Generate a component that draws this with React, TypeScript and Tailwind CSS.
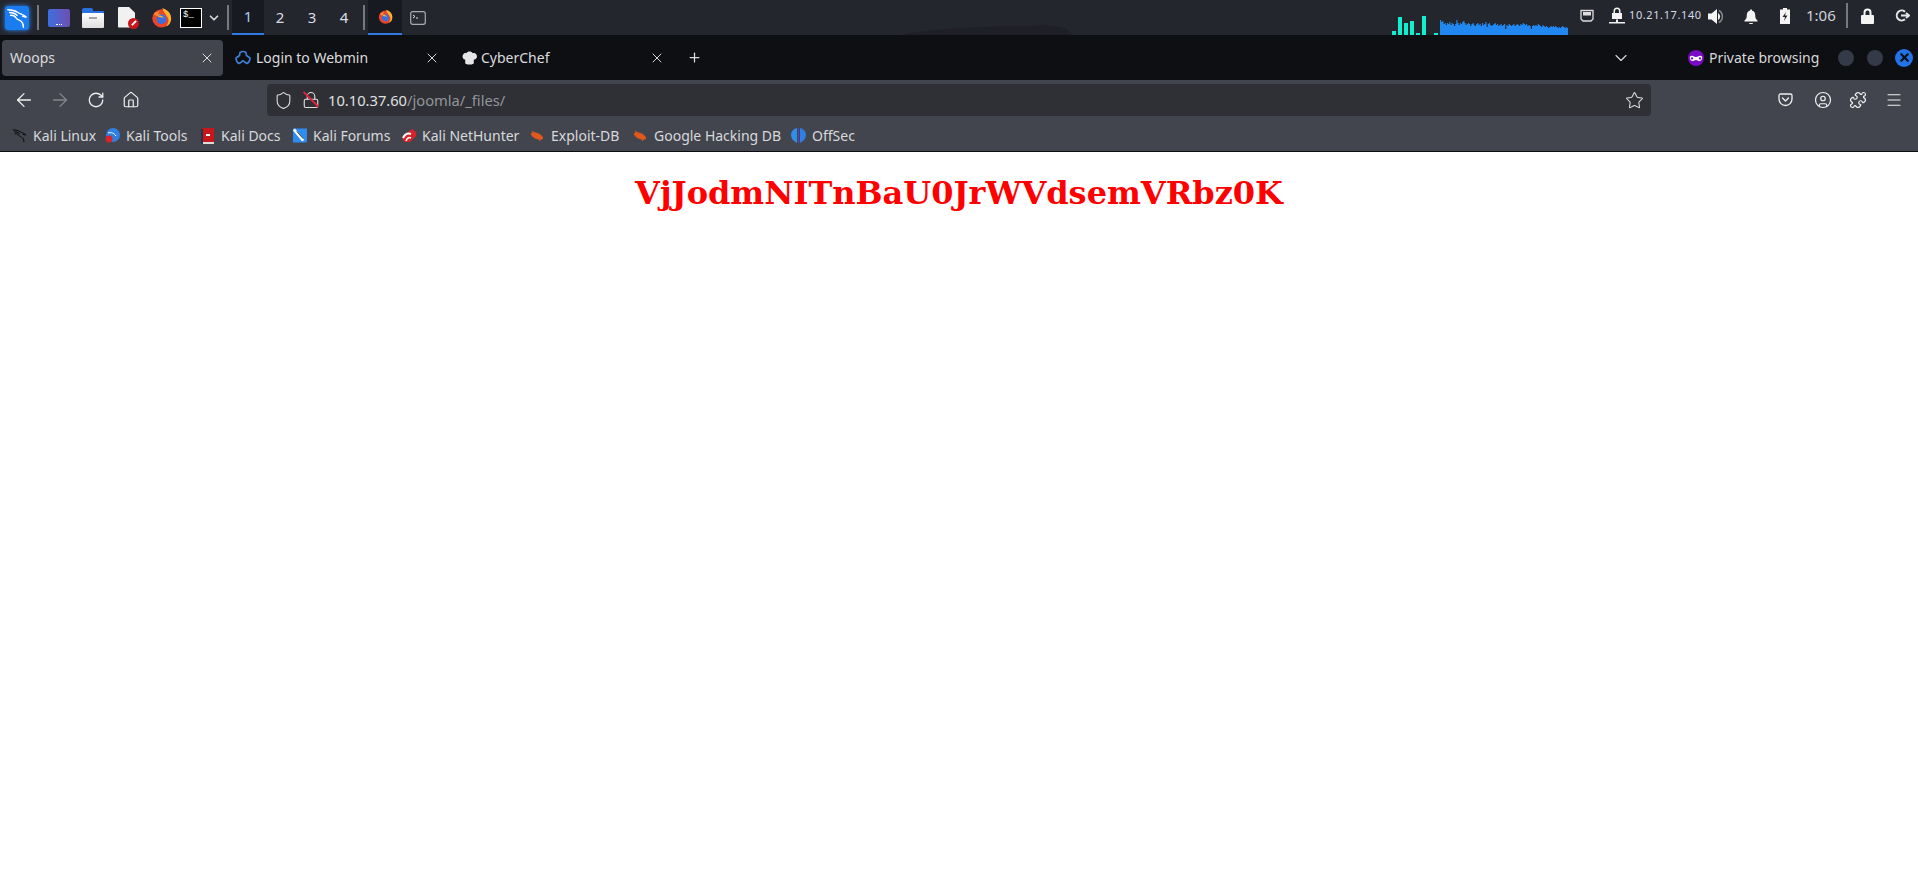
import { ArrowLeft, ArrowRight, RotateCw, Home, Shield, Star, CircleUser, Puzzle, Menu, X, Plus, ChevronDown, Lock } from 'lucide-react'
import type { ReactNode } from 'react'

const uiFont = 'font-["Noto_Sans",sans-serif]'

const cpuBars = [4, 18, 12, 14, 2, 19, 0, 2]

// rough outline of the network graph, one value per step
const netLevels = [15, 13, 14, 11, 12, 10, 12, 11, 13, 10, 12, 11, 9, 11, 15, 12, 10, 12, 11, 13, 14, 12, 10, 11, 12, 11, 9, 11, 12, 10, 9, 11, 12, 10, 11, 9, 12, 10, 11, 13, 8, 11, 12, 10, 9, 10, 11, 12, 10, 11, 9, 10, 11, 9, 10, 11, 6, 10, 9, 11, 10, 9, 10, 11, 9, 10, 11, 10, 9, 11, 10, 12, 11, 10, 11, 9, 10, 9, 6, 9, 10, 9, 10, 9, 11, 10, 9, 8, 10, 9, 8, 9, 8, 7, 8, 9, 8, 9, 8, 9, 8, 7, 8, 7, 8, 9, 8, 7, 8, 7]

const netPath =
  'M0 16 ' + netLevels.map((v, i) => `H${(i * 128) / netLevels.length} V${16 - v}`).join(' ') + ' H128 V16 Z'

function KaliDragon({ className = '', color = '#fff' }: { className?: string; color?: string }) {
  return (
    <svg className={className} viewBox="0 0 24 24" fill="none" stroke={color} strokeWidth={1.6} strokeLinecap="round" strokeLinejoin="round">
      <path d="M2 3c4 0 8 1 11 3 3 2 6 2 9 5" />
      <path d="M4 6c3 0 6 1 8 3" />
      <path d="M5 9c3 0 5 1 6 3 1 2 4 2 6 4 2 2 2 4 2 6" />
      <path d="M21 11l-3-1" />
    </svg>
  )
}

function FirefoxIcon({ size = 21 }: { size?: number }) {
  return (
    <svg width={size} height={size} viewBox="0 0 24 24">
      <circle cx="12" cy="13" r="10.500" fill="#e8452c" />
      <path d="M13 1c5 2 10 5 10 12 0 4-2 8-6 9 3-3 4-7 2-10-1-3-5-6-6-11z" fill="#ffb22e" />
      <path d="M3 8c2-3 5-3 7-3l-2 3 6 1c-1 2-3 2-5 2-2-1-4-1-6-3z" fill="#ff8a2b" />
      <circle cx="12" cy="14" r="5.500" fill="#3b6fe0" />
      <path d="M7 10c3-1 6 0 8 2-3 0-6 0-8-2z" fill="#ffb22e" />
    </svg>
  )
}

function PanelDivider() {
  return <div className="w-[2px] h-[25px] bg-[#77797e]" />
}

function Workspace({ n, active }: { n: number; active?: boolean }) {
  return (
    <div className={`w-[32px] h-[35px] flex items-center justify-center text-[15px] ${active ? 'bg-[#181a21] border-b-2 border-[#2f7ae5] text-[#a5cdf5]' : 'text-[#d8dde6]'}`}>
      {n}
    </div>
  )
}

function TopPanel() {
  return (
    <div className={`relative h-[35px] bg-[#24262e] flex items-center ${uiFont}`}>
      <svg className="absolute left-[900px] top-[24px]" width="185" height="11" viewBox="0 0 185 11">
        <path d="M0 11C30 5 80 2 130 2c15-2 30 0 37 3l6 6z" fill="#1f2027" />
      </svg>

      <div className="relative ml-[5px] w-[24px] h-[24px] rounded-[3px] bg-[#1b7cf0] shadow-[0_0_5px_#2a8cff] flex items-center justify-center">
        <KaliDragon className="w-[22px] h-[22px]" />
      </div>
      <div className="ml-[8px]"><PanelDivider /></div>
      <div className="ml-[9px] w-[22px] h-[18px] rounded-[2px] bg-gradient-to-r from-[#3a6ee0] to-[#6a4fb0] flex items-end justify-center">
        <span className="w-[6px] h-[2px] mb-[2px] border-b border-dotted border-white" />
      </div>
      <div className="ml-[12px] w-[22px] h-[20px] relative">
        <div className="absolute left-0 top-0 w-[11px] h-[6px] rounded-t-[2px] bg-[#2a6fe0]" />
        <div className="absolute left-0 top-[3px] w-[22px] h-[3px] bg-[#2a6fe0]" />
        <div className="absolute left-0 top-[5px] w-[22px] h-[15px] rounded-[1px] bg-gradient-to-b from-[#ffffff] to-[#dfdfdf] flex justify-center">
          <span className="w-[8px] h-[2px] mt-[4px] bg-[#a5a5a5]" />
        </div>
      </div>
      <div className="ml-[14px] w-[21px] h-[22px] relative">
        <div className="w-[17px] h-[21px] rounded-[1px] bg-[#f1f1f1] [clip-path:polygon(0_0,62%_0,100%_30%,100%_100%,0_100%)]" />
        <div className="absolute right-0 bottom-0 w-[11px] h-[11px] rounded-full bg-[#c8161d] flex items-center justify-center">
          <span className="w-[6px] h-[2px] bg-white -rotate-45" />
        </div>
      </div>
      <div className="ml-[12px]"><FirefoxIcon /></div>
      <div className="ml-[8px] w-[22px] h-[20px] border border-white bg-black text-white text-[9px] leading-[12px] pl-[2px] font-['Liberation_Mono',monospace]">
        $_
      </div>
      <ChevronDown className="ml-[5px] w-[14px] h-[14px] text-[#d8d8d8]" strokeWidth={3} />
      <div className="ml-[6px]"><PanelDivider /></div>
      <div className="ml-[3px] flex">
        <Workspace n={1} active />
        <Workspace n={2} />
        <Workspace n={3} />
        <Workspace n={4} />
      </div>
      <div className="ml-[3px]"><PanelDivider /></div>
      <div className="ml-[3px] w-[34px] h-[35px] bg-[#181a21] border-b-2 border-[#2f7ae5] flex items-center justify-center">
        <FirefoxIcon size={15} />
      </div>
      <div className="w-[32px] h-[35px] flex items-center justify-center">
        <svg width="16" height="14" viewBox="0 0 16 14" fill="none">
          <rect x="0.700" y="0.700" width="14.600" height="12.600" rx="2" fill="#2a2c33" stroke="#a9abb0" strokeWidth="1.200" />
          <path d="M3 4l2 1.500L3 7" stroke="#e0e0e0" />
          <path d="M6 7h2" stroke="#e0e0e0" />
        </svg>
      </div>

      <div className="relative ml-auto flex items-center">
        <div className="h-[34px] flex items-end gap-[2px] self-end">
          {cpuBars.map((h, i) => (
            <div key={i} className="w-[4px] bg-[#0ff0d0]" style={{ height: h }} />
          ))}
        </div>
        <svg className="ml-[2px] self-end" width="128" height="16" viewBox="0 0 128 16">
          <path d={netPath} fill="#2088f0" />
        </svg>
        <div className="h-[35px] flex items-center pb-[3px]">
          <svg className="ml-[12px]" width="14" height="14" viewBox="0 0 14 14" fill="none">
            <path d="M1 1.500h12v8.500l-2 2H3l-2-2z" stroke="#ddd" strokeWidth="1.300" />
            <path d="M3 3h8v3.500H3z" fill="#ddd" />
          </svg>
          <svg className="ml-[15px]" width="16" height="18" viewBox="0 0 16 18" fill="#f2f2f2">
            <path fillRule="evenodd" d="M4.500 6V4a3.500 3.500 0 0 1 7 0v2H13v6H3V6zM6 6h4V4a2 2 0 0 0-4 0z" />
            <path d="M7 12.500h2V15h7v1.500H0V15h7z" />
          </svg>
        </div>
        <span className="ml-[4px] -mt-[5px] w-[73px] text-[11px] tracking-[0.6px] text-[#d6dbe4] whitespace-nowrap">10.21.17.140</span>
        <svg className="ml-[6px] -mt-[3px]" width="17" height="17" viewBox="0 0 17 17">
          <path d="M0 5.500h3.500L9 1v15l-5.500-4.500H0z" fill="#f4f4f4" />
          <path d="M11 2.500a7 7 0 0 1 0 12" fill="none" stroke="#85878c" strokeWidth="1.500" />
          <path d="M10 5a4 4 0 0 1 0 7z" fill="#f4f4f4" />
        </svg>
        <svg className="ml-[19px] -mt-[3px]" width="14" height="15" viewBox="0 0 14 15" fill="#f4f4f4">
          <path d="M7 0.500c.8 0 1.200.6 1.200 1.200 2 .5 3 2.300 3 4.300 0 3 .8 4.300 2.300 5.500v1H.5v-1C2 10.300 2.800 9 2.800 6c0-2 1-3.800 3-4.300C5.800 1.100 6.200.5 7 .5z" />
          <path d="M5 14h4a2 1.200 0 0 1-4 0z" />
        </svg>
        <svg className="ml-[22px] -mt-[3px]" width="10" height="16" viewBox="0 0 10 16" fill="#f4f4f4">
          <path fillRule="evenodd" d="M3 0h4v1.500h3V16H0V1.500h3zM6 4 2.500 9H5l-1 4 3.500-5.500H5z" />
        </svg>
        <span className="ml-[16px] -mt-[5px] w-[27px] text-[15px] text-[#cfd3d9] whitespace-nowrap">1:06</span>
        <div className="ml-[13px] -mt-[4px]"><PanelDivider /></div>
        <svg className="ml-[13px] -mt-[4px]" width="13" height="16" viewBox="0 0 13 16" fill="#f4f4f4">
          <path fillRule="evenodd" d="M2.500 7V4.500a4 4 0 0 1 8 0V7H12a1 1 0 0 1 1 1v7a1 1 0 0 1-1 1H1a1 1 0 0 1-1-1V8a1 1 0 0 1 1-1zM4.500 7h4V4.500a2 2 0 0 0-4 0z" />
        </svg>
        <svg className="ml-[21px] mr-[8px] -mt-[4px]" width="15" height="13" viewBox="0 0 15 13" fill="none" stroke="#e5e5e5" strokeWidth="2">
          <path d="M10 2.700A5 5 0 1 0 10 10.300" />
          <path d="M6 6.500h8" />
          <path d="M11 4l3 2.500-3 2.500" />
        </svg>
      </div>
    </div>
  )
}

function TabClose({ className = '' }: { className?: string }) {
  return <X className={`w-[16px] h-[16px] text-[#e8e8e8] ${className}`} strokeWidth={1.4} />
}

function TabBar() {
  return (
    <div className={`h-[45px] bg-[#0e0f13] flex items-center text-[14px] text-[#dcdcde] ${uiFont}`}>
      <div className="ml-[2px] w-[221px] h-[36px] rounded-[4px] bg-[#42454e] flex items-center px-[8px] justify-between">
        <span>Woops</span>
        <TabClose />
      </div>
      <div className="ml-[12px] w-[205px] flex items-center">
        <svg width="16" height="16" viewBox="0 0 16 16" fill="none" stroke="#3f7fd6" strokeWidth="1.600" strokeLinejoin="round">
          <path d="M5 2.500Q8 .5 11 2.500L11.500 5.500 15 8Q15 12 12 13.500L9.500 12 8 10.500 6.500 12 4 13.500Q1 12 1 8L4.500 5.500z" />
        </svg>
        <span className="ml-[5px]">Login to Webmin</span>
        <TabClose className="ml-auto" />
      </div>
      <div className="ml-[22px] w-[203px] flex items-center">
        <svg width="15" height="15" viewBox="0 0 14 14" fill="#e6e6e6">
          <path d="M3 9C.5 8.500 0 6 1 4.500 1.500 3 3 2.500 4 3c1-2 5-2 6 0 1-.5 3 0 3.500 1.500 1 1.500.5 4-2.500 4.500v3.500C8 14 6 14 3 12.500z" />
        </svg>
        <span className="ml-[4px]">CyberChef</span>
        <TabClose className="ml-auto" />
      </div>
      <Plus className="ml-[22px] w-[15px] h-[15px]" />
      <ChevronDown className="ml-[909px] w-[20px] h-[20px]" strokeWidth={1.3} />
      <svg className="ml-[57px]" width="16" height="16" viewBox="0 0 16 16">
        <circle cx="8" cy="8" r="8" fill="#7a0bc4" />
        <path fillRule="evenodd" d="M2 6.500c1-1 3-1 4 0 .8.500 3.200.5 4 0 1-1 3-1 4 0 .5 2 0 4-2 4.500-1.500.3-2.500-1-4-1s-2.500 1.300-4 1c-2-.5-2.500-2.500-2-4.500zM4 7.200a1.200 1.200 0 1 0 .01 0zM12 7.200a1.200 1.200 0 1 0 .01 0z" fill="#fff" />
      </svg>
      <span className="ml-[5px] w-[109px] whitespace-nowrap text-[14px] text-[#d8d8da]">Private browsing</span>
      <div className="ml-[20px] w-[16px] h-[16px] rounded-full bg-[#353a48]" />
      <div className="ml-[13px] w-[16px] h-[16px] rounded-full bg-[#353a48]" />
      <div className="ml-[12px] w-[18px] h-[18px] rounded-full bg-[#2272e8] flex items-center justify-center">
        <X className="w-[13px] h-[13px] text-[#0e0f13]" strokeWidth={4} />
      </div>
    </div>
  )
}

function NavBar() {
  return (
    <div className={`h-[40px] bg-[#42454e] flex items-center text-[#f0f0f0] ${uiFont}`}>
      <ArrowLeft className="ml-[13px] w-[22px] h-[22px]" strokeWidth={1.4} />
      <ArrowRight className="ml-[14px] w-[22px] h-[22px] text-[#85878d]" strokeWidth={1.4} />
      <RotateCw className="ml-[16px] w-[18px] h-[18px]" strokeWidth={1.7} />
      <Home className="ml-[17px] w-[18px] h-[18px]" strokeWidth={1.6} />
      <div className="ml-[127px] w-[1384px] h-[32px] rounded-[4px] bg-[#2e3036] flex items-center">
        <Shield className="ml-[7px] w-[19px] h-[19px] text-[#dcdcdc]" strokeWidth={1.4} />
        <div className="ml-[9px] w-[18px] h-[18px] relative">
          <Lock className="w-[18px] h-[18px] text-[#dcdcdc]" strokeWidth={1.5} />
          <div className="absolute left-[8px] -top-[2px] w-[1.5px] h-[21px] bg-[#e0223c] -rotate-45" />
        </div>
        <span className="ml-[8px] text-[14.7px] text-[#e0e0e0]">10.10.37.60<span className="text-[#93959a]">/joomla/_files/</span></span>
        <Star className="ml-auto mr-[7px] w-[19px] h-[19px] text-[#e0e0e0]" strokeWidth={1.3} />
      </div>
      <svg className="ml-[127px]" width="15" height="14" viewBox="0 0 15 14" fill="none" stroke="#f0f0f0" strokeWidth="1.300" strokeLinejoin="round">
        <path d="M1 2.500C1 1.500 1.700 1 2.500 1h10c.8 0 1.500.5 1.500 1.500v3.500a6.500 6.500 0 0 1-13 0z" />
        <path d="M4.500 5 7.500 8l3-3" strokeLinecap="round" />
      </svg>
      <CircleUser className="ml-[21px] w-[18px] h-[18px]" strokeWidth={1.6} />
      <Puzzle className="ml-[17px] w-[18px] h-[18px]" strokeWidth={1.6} />
      <Menu className="ml-[18px] w-[18px] h-[18px]" strokeWidth={1.5} />
    </div>
  )
}

function Bookmark({ label, icon, width }: { label: string; icon: ReactNode; width: string }) {
  return (
    <div className={`flex items-center gap-[6px] ${width}`}>
      <div className="w-[15px] h-[16px] flex items-center justify-center shrink-0">{icon}</div>
      <span className="whitespace-nowrap">{label}</span>
    </div>
  )
}

function Roach() {
  return (
    <svg width="15" height="12" viewBox="0 0 15 12" fill="#e2571c">
      <ellipse cx="7" cy="6" rx="6.500" ry="3" transform="rotate(25 7 6)" />
      <path d="M2 1l4 3M9 11l3-3" stroke="#e2571c" fill="none" />
    </svg>
  )
}

function BookmarksBar() {
  return (
    <div className={`h-[32px] bg-[#42454e] border-b border-[#0c0c0f] flex items-center pl-[12px] text-[14px] text-[#d8d9db] ${uiFont}`}>
      <Bookmark label="Kali Linux" width="w-[93px]" icon={<KaliDragon className="w-[15px] h-[15px]" color="#0a0a0a" />} />
      <Bookmark label="Kali Tools" width="w-[95px]" icon={
        <svg width="15" height="15" viewBox="0 0 15 15">
          <circle cx="8" cy="7" r="7" fill="#2e7fe0" />
          <path d="M3 5c3-1 6 0 8 3" stroke="#fff" fill="none" />
          <circle cx="4" cy="11" r="3.500" fill="#d9222a" />
        </svg>
      } />
      <Bookmark label="Kali Docs" width="w-[92px]" icon={
        <svg width="13" height="16" viewBox="0 0 13 16">
          <path d="M1 0h12v14H1z" fill="#c8161d" />
          <path d="M0 1h2v15H0z" fill="#23324f" />
          <path d="M2 14h11v2H2z" fill="#dcdcdc" />
          <path d="M5 7h4" stroke="#fff" strokeWidth="2" />
        </svg>
      } />
      <Bookmark label="Kali Forums" width="w-[109px]" icon={
        <svg width="16" height="15" viewBox="0 0 16 15">
          <path d="M1 0h15v13a2 2 0 0 1-2 2H1z" fill="#2e8cf0" />
          <path d="M2 1l10 12" stroke="#fff" strokeWidth="3" />
          <path d="M5 3l7 8" stroke="#33373f" strokeWidth="1" />
        </svg>
      } />
      <Bookmark label="Kali NetHunter" width="w-[129px]" icon={
        <svg width="15" height="15" viewBox="0 0 15 15">
          <path d="M1 9 11 1l4 3v4L9 14H3z" fill="#d9222a" />
          <path d="M2 10c2-4 5-5 8-4" stroke="#fff" strokeWidth="2" fill="none" />
          <path d="M5 13c1-3 3-4 5-3" stroke="#fff" strokeWidth="1.500" fill="none" />
        </svg>
      } />
      <Bookmark label="Exploit-DB" width="w-[103px]" icon={<Roach />} />
      <Bookmark label="Google Hacking DB" width="w-[158px]" icon={<Roach />} />
      <Bookmark label="OffSec" width="w-[70px]" icon={
        <svg width="15" height="15" viewBox="0 0 15 15">
          <path d="M6 0C2 1 0 4 0 7s2 6 6 8z" fill="#2f8fe8" />
          <path d="M9 0c4 1 6 4 6 7s-2 6-6 8z" fill="#2f7fe0" />
          <path d="M7 0h1v15H7z" fill="#5a3fd0" />
        </svg>
      } />
    </div>
  )
}

export default function App() {
  return (
    <div className="w-[1918px] h-[878px] overflow-hidden bg-white">
      <TopPanel />
      <TabBar />
      <NavBar />
      <BookmarksBar />
      <h1 className="mt-[23px] text-center text-[32px] leading-[37px] font-bold text-[#ff0000] font-['DejaVu_Serif',serif]">
        VjJodmNITnBaU0JrWVdsemVRbz0K
      </h1>
    </div>
  )
}
